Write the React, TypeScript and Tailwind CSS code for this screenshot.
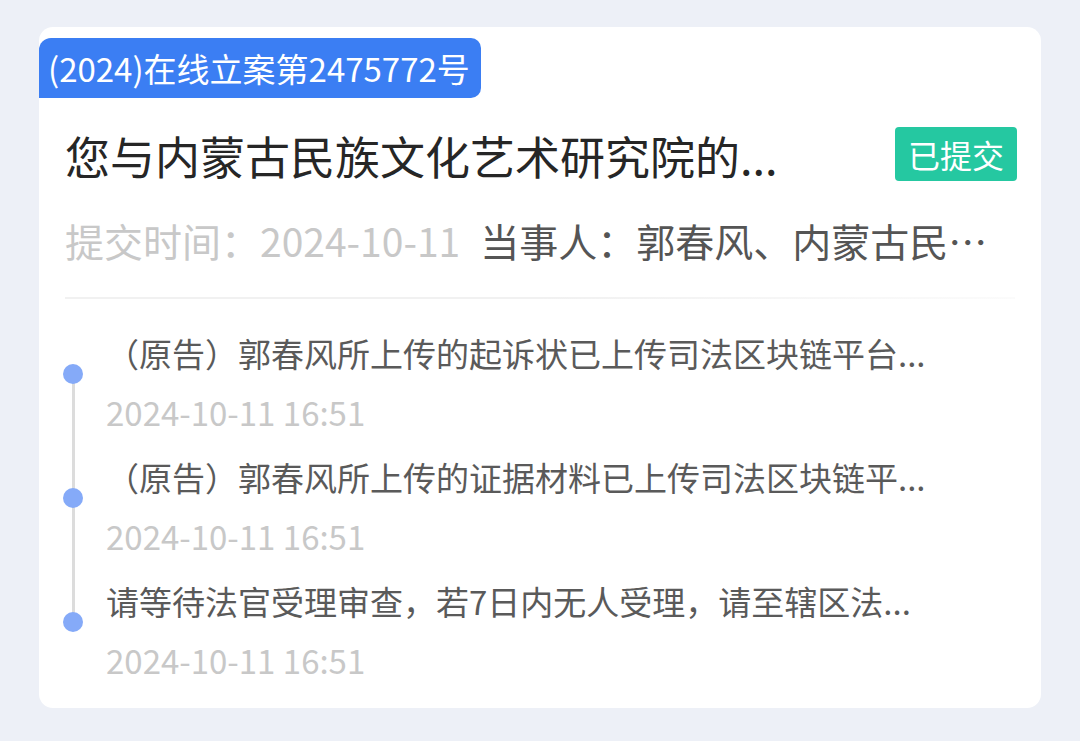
import React from "react";

const items = [
  { text: "（原告）郭春风所上传的起诉状已上传司法区块链平台...", time: "2024-10-11 16:51" },
  { text: "（原告）郭春风所上传的证据材料已上传司法区块链平...", time: "2024-10-11 16:51" },
  { text: "请等待法官受理审查，若7日内无人受理，请至辖区法...", time: "2024-10-11 16:51" },
];

export default function App() {
  return (
    <div className="min-h-[741px] bg-[#edf0f7] pt-[27px] px-[39px] font-['Noto_Sans_CJK_SC',sans-serif]">
      <div className="bg-white rounded-[14px] h-[681px] pt-[11px]">
        <div className="inline-flex h-[60px] items-center pl-[9px] pr-[11px] bg-[#3b7ef3] rounded-tl-[12px] rounded-r-[10px] text-white text-[33px] leading-none">
          (2024)在线立案第2475772号
        </div>
        <div className="mt-[27px] flex items-center justify-between pl-[26px] pr-[24px]">
          <div className="text-[45px] leading-[54px] text-[#262626] pt-[4px]">您与内蒙古民族文化艺术研究院的...</div>
          <div className="h-[54px] flex items-center px-[13px] bg-[#25c8a1] rounded-[4px] text-white text-[32px] leading-none">
            已提交
          </div>
        </div>
        <div className="mt-[33px] pl-[26px] flex items-center text-[39px] leading-[48px] whitespace-nowrap">
          <span className="text-[#c8c8c8]">提交时间：2024-10-11</span>
          <span className="ml-[20px] text-[#555]">当事人：郭春风、内蒙古民…</span>
        </div>
        <div className="mt-[33px] mx-[26px] h-[2px] bg-gradient-to-r from-[#f1f1f1] via-[#f1f1f1] to-[#fbfbfb]" />
        <div className="relative mt-[32px]">
          <div className="absolute left-[33px] top-[43px] bottom-[81px] w-[3px] bg-[#dcdcdc]" />
          {items.map((it, i) => (
            <div key={i} className="relative h-[124px] pl-[67px]">
              <div className="absolute left-[24px] top-[33px] w-[20px] h-[20px] rounded-full bg-[#85aaf8]" />
              <div className="text-[33px] leading-[44px] text-[#5a5a5a] whitespace-nowrap">{it.text}</div>
              <div className="mt-[13px] text-[33px] leading-[48px] text-[#c8c8c8] whitespace-nowrap">{it.time}</div>
            </div>
          ))}
        </div>
      </div>
    </div>
  );
}
